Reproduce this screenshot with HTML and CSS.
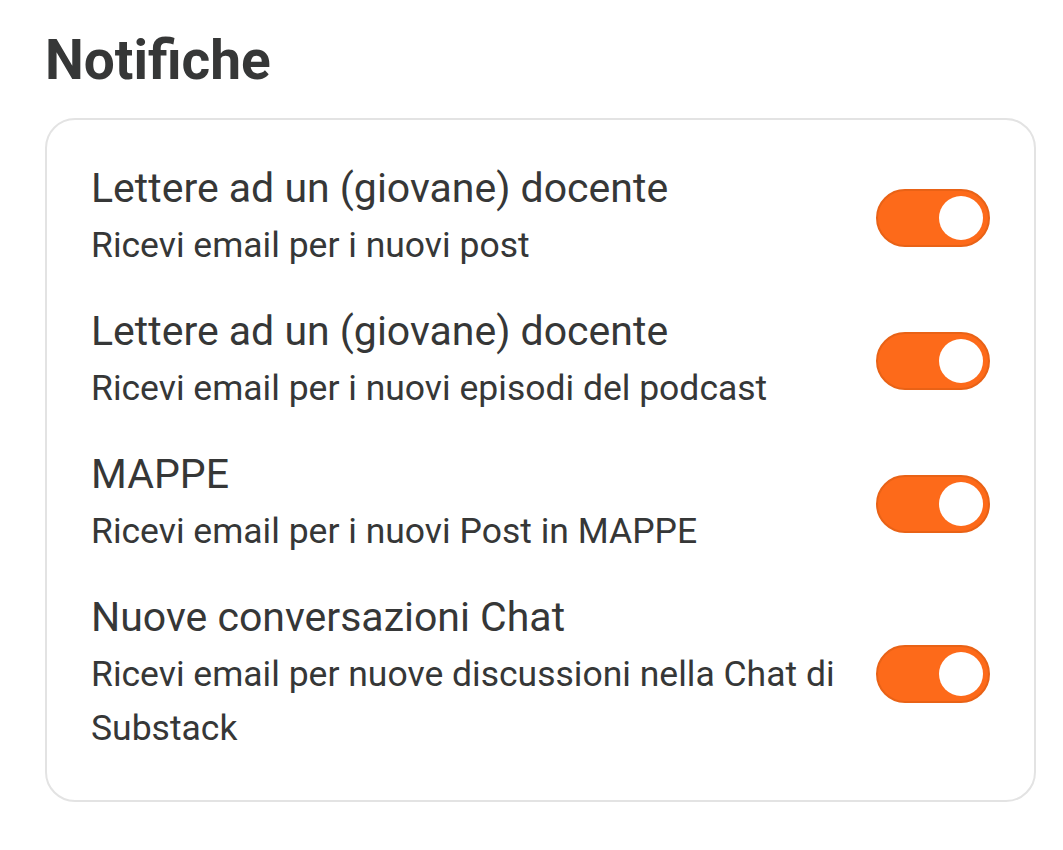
FILE: index.html
```html
<!DOCTYPE html>
<html>
<head>
  <meta charset="UTF-8">
  <title>Notifiche</title>
  <meta name="viewport" content="width=device-width, initial-scale=1">
  <link rel="stylesheet" href="styles.css">
</head>
<body>

<div class="page">
  <h1>Notifiche</h1>

  <div class="card">
    <!-- Publication notification toggles -->
    <div class="row">
      <div class="text">
        <div class="title">Lettere ad un (giovane) docente</div>
        <div class="sub">Ricevi email per i nuovi post</div>
      </div>
      <label class="toggle"><input type="checkbox" checked><span class="knob"></span></label>
    </div>

    <div class="row">
      <div class="text">
        <div class="title">Lettere ad un (giovane) docente</div>
        <div class="sub">Ricevi email per i nuovi episodi del podcast</div>
      </div>
      <label class="toggle"><input type="checkbox" checked><span class="knob"></span></label>
    </div>

    <div class="row">
      <div class="text">
        <div class="title">MAPPE</div>
        <div class="sub">Ricevi email per i nuovi Post in MAPPE</div>
      </div>
      <label class="toggle"><input type="checkbox" checked><span class="knob"></span></label>
    </div>

    <div class="row">
      <div class="text">
        <div class="title">Nuove conversazioni Chat</div>
        <div class="sub">Ricevi email per nuove discussioni nella Chat di Substack</div>
      </div>
      <label class="toggle"><input type="checkbox" checked><span class="knob"></span></label>
    </div>
  </div>
</div>

</body>
</html>
```

FILE: styles.css
```css
/* Plain white settings page */
body {
  font-family: Roboto, "Noto Sans", sans-serif;
  margin: 0;
  padding: 0;
  background: #ffffff;
  color: #363737;
}
.page {
  padding: 22px 27px 0 45px;
}
h1 {
  font-size: 55px;
  font-weight: 700;
  margin: 0 0 20px 0;
  line-height: 76px;
  color: #363737;
}
.card {
  border: 2px solid #e3e3e3;
  border-radius: 30px;
  padding: 26px 44px 28px 44px;
}
.row {
  display: flex;
  align-items: center;
  justify-content: space-between;
  gap: 36px;
  padding: 17px 0;
}
.title {
  font-size: 41px;
  line-height: 50px;
}
.sub {
  font-size: 35.5px;
  line-height: 54px;
  margin-top: 5px;
}
.toggle {
  position: relative;
  flex: none;
  width: 114px;
  height: 58px;
}
.toggle input {
  display: none;
}
.knob {
  display: block;
  width: 100%;
  height: 100%;
  box-sizing: border-box;
  border-radius: 29px;
  background: #fd6a1a;
  border: 2px solid #e96216;
}
.knob::after {
  content: "";
  position: absolute;
  top: 7px;
  right: 7px;
  width: 44px;
  height: 44px;
  border-radius: 50%;
  background: #ffffff;
}
```
